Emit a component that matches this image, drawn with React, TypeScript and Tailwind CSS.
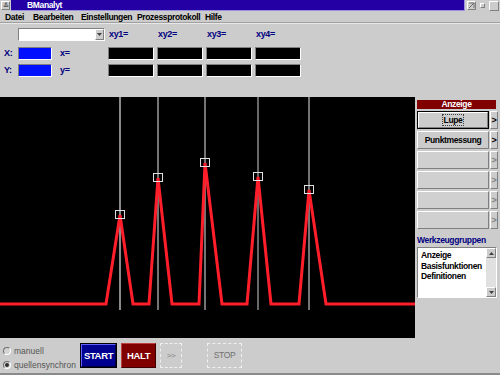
import React from 'react';

const raised = 'border border-t-white border-l-white border-r-[#808080] border-b-[#808080]';
const sunken = 'border border-t-[#808080] border-l-[#808080] border-r-white border-b-white';

// chart coordinates, relative to the black plot area (415 x 241)
const BASE = 207;
const peaks = [
  { x: 120, y: 118, from: 106, to: 133, line: '#8a8a8a', lw: 2 },
  { x: 158, y: 81, from: 149, to: 172, line: '#e8e8e8', lw: 1 },
  { x: 205, y: 66, from: 199, to: 222, line: '#e8e8e8', lw: 1 },
  { x: 258, y: 80, from: 247, to: 271, line: '#8a8a8a', lw: 1.5 },
  { x: 309, y: 93, from: 299, to: 326, line: '#e8e8e8', lw: 1 },
];

const curve = [
  `0,${BASE}`,
  ...peaks.flatMap((p) => [`${p.from},${BASE}`, `${p.x},${p.y}`, `${p.to},${BASE}`]),
  `415,${BASE}`,
].join(' ');

const menu = ['Datei', 'Bearbeiten', 'Einstellungen', 'Prozessprotokoll', 'Hilfe'];
const menuX = [5, 33, 81, 137, 205];

const Chart: React.FC = () => (
  <svg width={415} height={241} viewBox="0 0 415 241" className="block">
    <rect x={0} y={0} width={415} height={241} fill="#000" />
    {peaks.map((p) => (
      <line key={'l' + p.x} x1={p.x} y1={0} x2={p.x} y2={213} stroke={p.line} strokeWidth={p.lw} />
    ))}
    <polyline points={curve} fill="none" stroke="#ff1e2a" strokeWidth={3} strokeLinejoin="miter" />
    {peaks.map((p) => (
      <rect key={'m' + p.x} x={p.x - 4.5} y={p.y - 4.5} width={9} height={8} fill="none" stroke="#e0e0e0" strokeWidth={1} />
    ))}
  </svg>
);

const SideButton: React.FC<{ label?: string; active?: boolean; focus?: boolean }> = ({ label, active, focus }) => (
  <div className="flex h-[18px]">
    <div className={`w-[72px] h-[18px] ${focus ? 'border border-black' : ''}`}>
      <div className={`h-full flex items-center justify-center ${raised} ${active ? 'bg-[#cccccc]' : 'bg-[#d0d0d0]'}`}>
        {label && (
          <span className={`text-black ${focus ? 'outline outline-1 outline-dotted outline-[#404040] outline-offset-1' : ''}`}>{label}</span>
        )}
      </div>
    </div>
    <div className={`ml-[1px] w-[8px] h-[18px] flex items-center justify-center ${raised} ${active ? 'text-black' : 'text-[#808080]'}`}>
      <span className="text-[9px] leading-none">&gt;</span>
    </div>
  </div>
);

const Radio: React.FC<{ label: string; checked?: boolean }> = ({ label, checked }) => (
  <div className="flex items-center h-[14px]">
    <div className="w-[8px] h-[8px] rounded-full border border-t-[#707070] border-l-[#707070] border-r-white border-b-white bg-[#d4d4d4] flex items-center justify-center">
      {checked && <div className="w-[4px] h-[4px] rounded-full bg-[#303030]" />}
    </div>
    <span className="ml-[3px] font-normal text-[#555555] tracking-normal">{label}</span>
  </div>
);

export default function App() {
  return (
    <div className="w-[500px] h-[375px] bg-[#cccccc] flex flex-col overflow-hidden font-['Liberation_Sans',Arial,sans-serif] text-[8.5px] font-bold tracking-[-0.35px] text-black leading-none">
      {/* title bar */}
      <div className="flex h-[11px]">
        <div className="w-[11px] h-[11px] flex items-center justify-center">
          <div className={`w-[9px] h-[9px] ${raised} flex items-center justify-center text-[7px] text-[#606060]`}>≚</div>
        </div>
        <div className="flex-1 h-[11px] bg-[#2400a4] border-b border-r border-[#9a90e0] flex items-center pl-[16px]">
          <span className="text-white">BManalyt</span>
        </div>
        <div className="flex items-center gap-[2px] pl-[2px] pr-[1px]">
          <div className={`w-[9px] h-[9px] ${raised} flex items-center justify-center`}>
            <svg width={7} height={7}><path d="M1 6 L6 1 M1 1 H6 V6" stroke="#707070" strokeWidth={1} fill="none" /></svg>
          </div>
          <div className="w-[9px] h-[9px] flex items-center justify-center">
            <div className={`w-[5px] h-[5px] ${raised}`} />
          </div>
          <div className={`w-[10px] h-[10px] ${raised}`} />
        </div>
      </div>

      {/* menu bar */}
      <div className="relative h-[11px]">
        {menu.map((m, i) => (
          <span key={m} className="absolute top-[2px]" style={{ left: menuX[i] }}>{m}</span>
        ))}
      </div>
      <div className="h-[2px] border-t border-[#a0a0a0] border-b border-b-[#e8e8e8]" />

      {/* coordinates */}
      <div className="h-[73px] flex flex-col pt-[4px]">
        <div className="flex h-[13px] items-center">
          <div className={`ml-[18px] w-[87px] h-[13px] flex ${sunken} bg-white`}>
            <div className="flex-1" />
            <div className={`w-[9px] h-full ${raised} bg-[#cccccc] flex items-center justify-center`}>
              <svg width={5} height={3}><path d="M0 0 H5 L2.5 3 Z" fill="#404040" /></svg>
            </div>
          </div>
          <div className="ml-[3px] flex gap-[3px] text-[#000080] text-[9px]">
            {['xy1=', 'xy2=', 'xy3=', 'xy4='].map((t) => (
              <span key={t} className="w-[46px] pl-[1px]">{t}</span>
            ))}
          </div>
        </div>
        {['X', 'Y'].map((c, i) => (
          <div key={c} className={`flex h-[13px] items-center ${i === 0 ? 'mt-[6px]' : 'mt-[4px]'}`}>
            <span className="w-[18px] pl-[4px] text-[#000080] text-[9px]">{c}:</span>
            <div className={`w-[34px] h-[13px] bg-[#0010ff] ${sunken}`} />
            <span className="ml-[8px] w-[48px] text-[#000080] text-[9px]">{c.toLowerCase()}=</span>
            <div className="flex gap-[3px]">
              {[0, 1, 2, 3].map((k) => (
                <div key={k} className={`w-[46px] h-[13px] bg-black ${sunken}`} />
              ))}
            </div>
          </div>
        ))}
      </div>

      {/* plot + tools */}
      <div className="flex h-[241px]">
        <Chart />
        <div className="flex-1 pl-[2px] pt-[3px] flex flex-col">
          <div className="w-[79px] h-[9px] bg-[#800000] text-white flex items-center justify-center">Anzeige</div>
          <div className="mt-[2px] flex flex-col gap-[2px]">
            <SideButton label="Lupe" active focus />
            <SideButton label="Punktmessung" active />
            <SideButton />
            <SideButton />
            <SideButton />
            <SideButton />
          </div>
          <div className="mt-[7px] text-[#000080] h-[9px]">Werkzeuggruppen</div>
          <div className={`mt-[2px] w-[80px] h-[51px] bg-white ${sunken} flex`}>
            <div className="flex-1 pl-[3px] pt-[3px] flex flex-col gap-[2px]">
              <span>Anzeige</span>
              <span>Basisfunktionen</span>
              <span>Definitionen</span>
            </div>
            <div className="w-[10px] flex flex-col bg-[#e0e0e0]">
              <div className={`h-[10px] ${raised} bg-[#cccccc] flex items-center justify-center`}>
                <svg width={5} height={3}><path d="M0 3 H5 L2.5 0 Z" fill="#404040" /></svg>
              </div>
              <div className="flex-1" />
              <div className={`h-[10px] ${raised} bg-[#cccccc] flex items-center justify-center`}>
                <svg width={5} height={3}><path d="M0 0 H5 L2.5 3 Z" fill="#404040" /></svg>
              </div>
            </div>
          </div>
        </div>
      </div>

      {/* controls */}
      <div className="h-[37px] flex items-start pt-[5px] pl-[3px] border-b-2 border-[#8a8a8a]">
        <div className="w-[77px] mt-[1px] flex flex-col">
          <Radio label="manuell" />
          <Radio label="quellensynchron" checked />
        </div>
        <div className="w-[37px] h-[25px] border border-black">
          <div className="h-full bg-[#000090] border border-t-[#6060ff] border-l-[#6060ff] border-r-[#000040] border-b-[#000040] text-white text-[9.5px] flex items-center justify-center">START</div>
        </div>
        <div className="ml-[4px] w-[35px] h-[25px] bg-[#800000] border border-t-[#c04040] border-l-[#c04040] border-r-[#400000] border-b-[#400000] text-white text-[9.5px] flex items-center justify-center">HALT</div>
        <div className="ml-[4px] w-[22px] h-[25px] border border-dashed border-[#f0f0f0] text-[#808080] font-normal text-[8px] flex items-center justify-center">&gt;&gt;</div>
        <div className="ml-[25px] w-[35px] h-[25px] border border-dashed border-[#f0f0f0] text-[#707070] font-normal text-[8.5px] flex items-center justify-center">STOP</div>
      </div>
    </div>
  );
}
